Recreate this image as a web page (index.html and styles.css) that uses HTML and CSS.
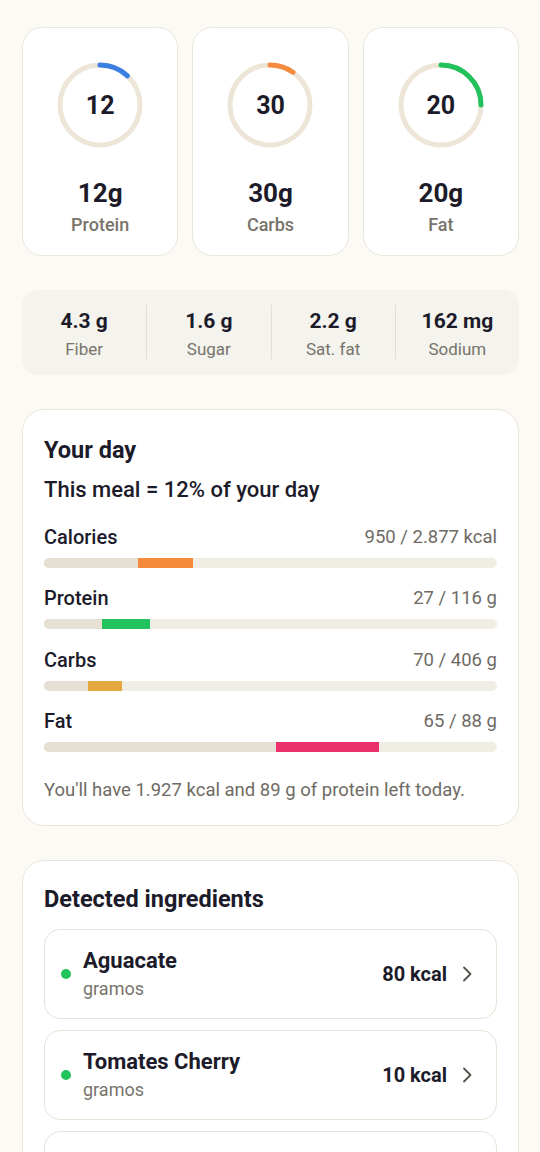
FILE: index.html
```html
<!DOCTYPE html>
<html>
<head>
<meta charset="utf-8">
<link rel="stylesheet" href="styles.css">
</head>
<body>
<main class="page">
  <section class="macros">
    <div class="macro-card">
      <div class="ring">
        <svg width="90" height="90" viewBox="0 0 90 90">
          <circle class="ring-bg" cx="45" cy="45" r="40"/>
          <circle class="ring-arc arc-blue" cx="45" cy="45" r="40" style="stroke-dasharray: 30.2 251.3"/>
        </svg>
        <span class="ring-num">12</span>
      </div>
      <div class="macro-val">12g</div>
      <div class="macro-label">Protein</div>
    </div>
    <div class="macro-card">
      <div class="ring">
        <svg width="90" height="90" viewBox="0 0 90 90">
          <circle class="ring-bg" cx="45" cy="45" r="40"/>
          <circle class="ring-arc arc-orange" cx="45" cy="45" r="40" style="stroke-dasharray: 24.4 251.3"/>
        </svg>
        <span class="ring-num">30</span>
      </div>
      <div class="macro-val">30g</div>
      <div class="macro-label">Carbs</div>
    </div>
    <div class="macro-card">
      <div class="ring">
        <svg width="90" height="90" viewBox="0 0 90 90">
          <circle class="ring-bg" cx="45" cy="45" r="40"/>
          <circle class="ring-arc arc-green" cx="45" cy="45" r="40" style="stroke-dasharray: 62.8 251.3"/>
        </svg>
        <span class="ring-num">20</span>
      </div>
      <div class="macro-val">20g</div>
      <div class="macro-label">Fat</div>
    </div>
  </section>

  <section class="micros">
    <div class="micro"><div class="micro-val">4.3 g</div><div class="micro-label">Fiber</div></div>
    <div class="micro"><div class="micro-val">1.6 g</div><div class="micro-label">Sugar</div></div>
    <div class="micro"><div class="micro-val">2.2 g</div><div class="micro-label">Sat. fat</div></div>
    <div class="micro"><div class="micro-val">162 mg</div><div class="micro-label">Sodium</div></div>
  </section>

  <section class="card day">
    <h2 class="card-title">Your day</h2>
    <p class="day-sub">This meal = 12% of your day</p>
    <div class="bars">
      <div class="bar-row">
        <div class="bar-head"><span class="bar-name">Calories</span><span class="bar-val">950 / 2.877 kcal</span></div>
        <div class="bar"><span class="bar-prior" style="width:20.8%"></span><span class="bar-seg seg-orange" style="width:12.2%"></span></div>
      </div>
      <div class="bar-row">
        <div class="bar-head"><span class="bar-name">Protein</span><span class="bar-val">27 / 116 g</span></div>
        <div class="bar"><span class="bar-prior" style="width:12.9%"></span><span class="bar-seg seg-green" style="width:10.5%"></span></div>
      </div>
      <div class="bar-row">
        <div class="bar-head"><span class="bar-name">Carbs</span><span class="bar-val">70 / 406 g</span></div>
        <div class="bar"><span class="bar-prior" style="width:9.8%"></span><span class="bar-seg seg-amber" style="width:7.4%"></span></div>
      </div>
      <div class="bar-row">
        <div class="bar-head"><span class="bar-name">Fat</span><span class="bar-val">65 / 88 g</span></div>
        <div class="bar"><span class="bar-prior" style="width:51.2%"></span><span class="bar-seg seg-pink" style="width:22.8%"></span></div>
      </div>
    </div>
    <p class="day-note">You'll have 1.927 kcal and 89 g of protein left today.</p>
  </section>

  <section class="card ingredients">
    <h2 class="card-title">Detected ingredients</h2>
    <div class="ing-list">
      <div class="ing">
        <span class="dot"></span>
        <div class="ing-text"><div class="ing-name">Aguacate</div><div class="ing-unit">gramos</div></div>
        <span class="ing-kcal">80 kcal</span>
        <svg class="chev" width="10" height="16" viewBox="0 0 10 16"><path d="M2 1.5 L8.5 8 L2 14.5" fill="none" stroke="#55524d" stroke-width="1.8" stroke-linecap="round" stroke-linejoin="round"/></svg>
      </div>
      <div class="ing">
        <span class="dot"></span>
        <div class="ing-text"><div class="ing-name">Tomates Cherry</div><div class="ing-unit">gramos</div></div>
        <span class="ing-kcal">10 kcal</span>
        <svg class="chev" width="10" height="16" viewBox="0 0 10 16"><path d="M2 1.5 L8.5 8 L2 14.5" fill="none" stroke="#55524d" stroke-width="1.8" stroke-linecap="round" stroke-linejoin="round"/></svg>
      </div>
      <div class="ing ing-partial"></div>
    </div>
  </section>
</main>
</body>
</html>
```

FILE: styles.css
```css
* { box-sizing: border-box; }
html, body { margin: 0; padding: 0; }
body {
  background: #fbfaf5;
  font-family: Roboto, "Noto Sans", "Liberation Sans", sans-serif;
  color: #1c1b2a;
  overflow: hidden;
}
.page {
  padding: 27px 21px 0 22px;
  display: flex;
  flex-direction: column;
}

/* macro cards */
.macros {
  display: grid;
  grid-template-columns: repeat(3, 1fr);
  gap: 14px;
}
.macro-card {
  height: 229px;
  background: #fff;
  border: 1px solid #ebe6da;
  border-radius: 20px;
  padding-top: 32px;
  display: flex;
  flex-direction: column;
  align-items: center;
}
.ring {
  position: relative;
  width: 90px;
  height: 90px;
}
.ring svg { display: block; transform: rotate(-90deg); }
.ring-bg { fill: none; stroke: #ede6d8; stroke-width: 5; }
.ring-arc { fill: none; stroke-width: 5; stroke-linecap: round; }
.arc-blue { stroke: #3b7fe3; }
.arc-orange { stroke: #f58b3f; }
.arc-green { stroke: #22c15c; }
.ring-num {
  position: absolute;
  inset: 0;
  display: flex;
  align-items: center;
  justify-content: center;
  font-size: 25px;
  font-weight: 700;
  color: #1c1b2a;
}
.macro-val {
  margin-top: 28px;
  font-size: 26px;
  line-height: 30px;
  font-weight: 700;
}
.macro-label {
  margin-top: 6px;
  font-size: 18px;
  line-height: 22px;
  font-weight: 500;
  color: #77736b;
}

/* micros */
.micros {
  margin-top: 34px;
  background: #f5f3ed;
  border-radius: 16px;
  display: grid;
  grid-template-columns: repeat(4, 1fr);
  padding: 15px 0 16px;
}
.micro {
  text-align: center;
  padding-top: 4px;
  border-left: 1px solid #e4dfd4;
}
.micro:first-child { border-left: none; }
.micro-val {
  font-size: 21px;
  line-height: 24px;
  font-weight: 700;
}
.micro-label {
  margin-top: 6px;
  font-size: 17px;
  line-height: 20px;
  color: #77736b;
}

/* cards */
.card {
  background: #fff;
  border: 1px solid #ebe6da;
  border-radius: 22px;
  padding: 26px 21px 24px;
}
.card-title {
  margin: 0;
  font-size: 23.5px;
  line-height: 28px;
  font-weight: 700;
}
.day { margin-top: 34px; }
.day-sub {
  margin: 12px 0 0;
  font-size: 22px;
  line-height: 28px;
  font-weight: 500;
}
.bars {
  margin-top: 21px;
  display: flex;
  flex-direction: column;
  gap: 18.4px;
}
.bar-head {
  display: flex;
  justify-content: space-between;
  align-items: center;
  height: 24px;
}
.bar-name { font-size: 20px; font-weight: 500; }
.bar-val { font-size: 18.5px; color: #6f6b64; }
.bar {
  margin-top: 9px;
  height: 10px;
  border-radius: 5px;
  background: #f0ede5;
  display: flex;
  overflow: hidden;
}
.bar-prior { height: 100%; background: #e6e0d4; }
.bar-seg { height: 100%; }
.seg-orange { background: #f68b3c; }
.seg-green { background: #22c25c; }
.seg-amber { background: #e4a83e; }
.seg-pink { background: #ec306d; }
.day-note {
  margin: 27px 0 0;
  font-size: 18.5px;
  line-height: 22px;
  color: #6f6b64;
}

/* ingredients */
.ingredients { margin-top: 34px; padding-top: 24px; }
.ing-list {
  margin-top: 16px;
  display: flex;
  flex-direction: column;
  gap: 11px;
}
.ing {
  height: 90px;
  border: 1px solid #e7e2d7;
  border-radius: 16px;
  display: flex;
  align-items: center;
  padding: 0 24px 0 16px;
}
.dot {
  width: 10px;
  height: 10px;
  border-radius: 50%;
  background: #22c25c;
  flex: none;
}
.ing-text {
  margin-left: 12px;
  flex: 1;
  display: flex;
  flex-direction: column;
  gap: 4px;
}
.ing-name { font-size: 22px; line-height: 26px; font-weight: 700; }
.ing-unit { font-size: 18px; line-height: 22px; color: #77736b; }
.ing-kcal { font-size: 20px; font-weight: 700; }
.chev { margin-left: 15px; flex: none; }
```
